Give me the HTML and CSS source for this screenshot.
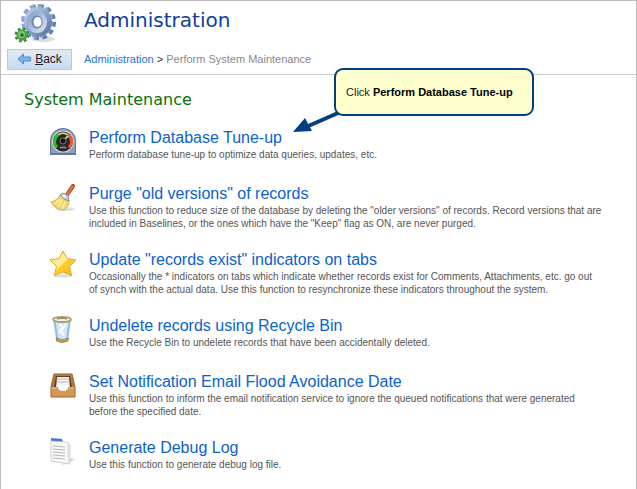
FILE: index.html
```
<!DOCTYPE html>
<html lang="en">
<head>
    <meta charset="UTF-8">
    <meta name="viewport" content="width=device-width, initial-scale=1.0">
    <title>Administration</title>
    <link rel="stylesheet" href="styles.css">
</head>
<body>
    <div class="page">
        <header class="header">
            <div class="logo">
                <svg width="44" height="44" viewBox="0 0 44 44">
                    <defs>
                        <linearGradient id="gearBlue" x1="0" y1="0" x2="1" y2="1">
                            <stop offset="0" stop-color="#c9d9ef"/>
                            <stop offset="0.5" stop-color="#8aa3cb"/>
                            <stop offset="1" stop-color="#526d9f"/>
                        </linearGradient>
                        <linearGradient id="gearFace" x1="0" y1="0" x2="1" y2="1">
                            <stop offset="0" stop-color="#7d99c4"/>
                            <stop offset="1" stop-color="#dce7f5"/>
                        </linearGradient>
                    </defs>
                    <ellipse cx="30" cy="37" rx="12" ry="3" fill="#dddddd"/>
                    <ellipse cx="26" cy="20" rx="15" ry="16" fill="none" stroke="#607caf" stroke-width="4" stroke-dasharray="4.5 3.6"/>
                    <ellipse cx="24" cy="19" rx="14" ry="15" fill="none" stroke="#8ea8d0" stroke-width="4" stroke-dasharray="4.5 3.1"/>
                    <ellipse cx="25" cy="20" rx="14" ry="15" fill="url(#gearBlue)"/>
                    <ellipse cx="24" cy="20" rx="10" ry="11" fill="url(#gearFace)"/>
                    <ellipse cx="24" cy="20" rx="5.5" ry="6.5" fill="#6883b3"/>
                    <ellipse cx="24.5" cy="20" rx="4" ry="5" fill="#ffffff"/>
                    <circle cx="9" cy="33" r="6" fill="none" stroke="#3f8c39" stroke-width="3" stroke-dasharray="2.7 2"/>
                    <circle cx="9" cy="33" r="5.5" fill="#4b9d42"/>
                    <circle cx="8.5" cy="32.5" r="3.5" fill="#83c477"/>
                    <circle cx="9" cy="33" r="1.8" fill="#28692a"/>
                </svg>
            </div>
            <h1>Administration</h1>
        </header>

        <nav class="toolbar">
            <button type="button" class="back" accesskey="b">
                <svg width="15" height="12" viewBox="0 0 15 12">
                    <path d="M1 6 L6.5 1 V4 H13.5 V8 H6.5 V11 Z" fill="#79b4f2" stroke="#5489c7"/>
                </svg>
                <span><u>B</u>ack</span>
            </button>
            <div class="breadcrumb">
                <a href="#">Administration</a> <span class="sep">&gt;</span> Perform System Maintenance
            </div>
        </nav>

        <main>
            <h2>System Maintenance</h2>

            <ul class="tasks">
                <li class="task">
                    <svg class="icon" viewBox="0 0 28 28">
                        <path d="M1 27 V13 A13 13 0 0 1 27 13 V27 Z" fill="#65799c"/>
                        <path d="M2 25 V13 A12 12 0 0 1 26 13 V25 Z" fill="#8d9fbd"/>
                        <circle cx="14" cy="13.5" r="11" fill="#d3d7dc"/>
                        <circle cx="14" cy="13.5" r="10" fill="#292929"/>
                        <path d="M8 19.5 A8 8 0 0 1 9 7" fill="none" stroke="#24c52b" stroke-width="3"/>
                        <path d="M9 7 A8 8 0 0 1 19 7" fill="none" stroke="#d8c778" stroke-width="2"/>
                        <path d="M19 7 A8 8 0 0 1 20 19.5" fill="none" stroke="#f0562b" stroke-width="3"/>
                        <path d="M14 13 L19 8" stroke="#eeeeee" stroke-width="1.5"/>
                        <circle cx="14" cy="13" r="3" fill="#111111" stroke="#777777"/>
                        <path d="M11 19.5 H17" stroke="#bbbbbb" stroke-width="1.5" stroke-dasharray="1.5 0.7"/>
                    </svg>
                    <div class="info">
                        <a href="#">Perform Database Tune-up</a>
                        <p>Perform database tune-up to optimize data queries, updates, etc.</p>
                    </div>
                </li>
                <li class="task">
                    <svg class="icon" viewBox="0 0 28 28">
                        <ellipse cx="16" cy="25" rx="10" ry="2" fill="#e2e2e2"/>
                        <path d="M17 12 L24 2" stroke="#a94a27" stroke-width="4" stroke-linecap="round"/>
                        <path d="M17 12 L23.5 2.5" stroke="#e67d48" stroke-width="2" stroke-linecap="round"/>
                        <path d="M11 11 C9 15 6 17 2 18 C4 22 9 26 15 26 C18 24 20 21 20 17 Z" fill="#eed675" stroke="#cfae50"/>
                        <path d="M11 15 L6 20 M13 16 L9 23 M16 18 L13 25" stroke="#fff2ad" stroke-width="1.5"/>
                        <path d="M11 11 Q13 8 17 10 Q20 12 20 17 Q15 16 11 11 Z" fill="#ced4dd" stroke="#858d9a"/>
                        <circle cx="15" cy="12" r="1.5" fill="#ffffff"/>
                    </svg>
                    <div class="info">
                        <a href="#">Purge "old versions" of records</a>
                        <p>Use this function to reduce size of the database by deleting the "older versions" of records. Record versions that are<br>
                        included in Baselines, or the ones which have the "Keep" flag as ON, are never purged.</p>
                    </div>
                </li>
                <li class="task">
                    <svg class="icon" viewBox="0 0 28 28">
                        <defs>
                            <linearGradient id="starGold" x1="0" y1="0" x2="1" y2="1">
                                <stop offset="0" stop-color="#ffe66c"/>
                                <stop offset="0.5" stop-color="#fff0a0"/>
                                <stop offset="0.52" stop-color="#ffce2c"/>
                                <stop offset="1" stop-color="#f9b812"/>
                            </linearGradient>
                        </defs>
                        <ellipse cx="14" cy="26" rx="10" ry="1.5" fill="#dddddd"/>
                        <path d="M14 1 L18 8.5 L27 10 L20.5 16.5 L22.5 25.5 L14 22 L5.5 25.5 L7.5 16.5 L1 10 L10 8.5 Z" fill="url(#starGold)" stroke="#e5a328" stroke-linejoin="round"/>
                    </svg>
                    <div class="info">
                        <a href="#">Update "records exist" indicators on tabs</a>
                        <p>Occasionally the * indicators on tabs which indicate whether records exist for Comments, Attachments, etc. go out<br>
                        of synch with the actual data. Use this function to resynchronize these indicators throughout the system.</p>
                    </div>
                </li>
                <li class="task">
                    <svg class="icon" viewBox="0 0 28 28">
                        <path d="M4 4 L7 24 Q13 27 19 24 L22 4 Z" fill="#d4e7f4"/>
                        <path d="M5.5 5 L8.5 24 M20.5 5 L18 24" stroke="#8dbfe6" stroke-width="2"/>
                        <path d="M10 8 L14 11 L11 15 L15 19 M17 8 L13 14" fill="none" stroke="#f8fcff" stroke-width="2"/>
                        <path d="M7 22 Q13 25 19.5 22 L19 25 Q13 28 7.5 25 Z" fill="#c2a05a" stroke="#806235" stroke-width="0.6"/>
                        <ellipse cx="13" cy="3.5" rx="9" ry="2.5" fill="#eef5f8" stroke="#b99a58" stroke-width="1.8"/>
                        <path d="M8 3 Q13 1.5 18 3" fill="none" stroke="#655e4e" stroke-width="0.8"/>
                    </svg>
                    <div class="info">
                        <a href="#">Undelete records using Recycle Bin</a>
                        <p>Use the Recycle Bin to undelete records that have been accidentally deleted.</p>
                    </div>
                </li>
                <li class="task">
                    <svg class="icon" viewBox="0 0 28 28">
                        <path d="M5 2 H23 L26 15 V25 H2 V15 Z" fill="#bc7837" stroke="#9b5e2b"/>
                        <path d="M7 4 H21 L23 15 H5 Z" fill="#59402c"/>
                        <path d="M8 5 H20 L21 17 H7 Z" fill="#f2f2f2"/>
                        <path d="M8 7 H20 M8 10 H20.5" stroke="#bcbcbc"/>
                        <path d="M2.5 15 H9 Q9 19 14 19 Q19 19 19 15 H25.5 V24.5 H2.5 Z" fill="#d49754"/>
                        <path d="M9 13 H19 V15 Q19 19 14 19 Q9 19 9 15 Z" fill="#ffffff"/>
                        <path d="M3 16 H8 M20 16 H25" stroke="#edc28a"/>
                    </svg>
                    <div class="info">
                        <a href="#">Set Notification Email Flood Avoidance Date</a>
                        <p>Use this function to inform the email notification service to ignore the queued notifications that were generated<br>
                        before the specified date.</p>
                    </div>
                </li>
                <li class="task">
                    <svg class="icon" viewBox="0 0 28 28">
                        <path d="M18 26 L26 21 L22 20 L12 27 Z" fill="#d8d8d8"/>
                        <path d="M2 0 L13 1 L15 6 L2 5 Z" fill="#3e7cd2"/>
                        <path d="M2 3 L18 4 L21 7 V26 L2 23 Z" fill="#f8f8f8" stroke="#c2c5ca" stroke-width="0.8"/>
                        <path d="M18 5 L21 7 V26 L19 25.5 Z" fill="#dde0e5"/>
                        <path d="M4 8 L16 9 M4 11 L16 12 M4 14 L16 15 M4 17 L16 18 M4 20 L16 21" stroke="#b4b8bf"/>
                    </svg>
                    <div class="info">
                        <a href="#">Generate Debug Log</a>
                        <p>Use this function to generate debug log file.</p>
                    </div>
                </li>
            </ul>
        </main>

        <!-- Help callout, lies over the page -->
        <div class="callout">
            Click <b>Perform Database Tune-up</b>
            <svg class="arrow" width="48" height="26" viewBox="0 0 48 26">
                <path d="M46 4 L14 18" stroke="#003f80" stroke-width="4"/>
                <path d="M1 23 L13 9 L20 22 Z" fill="#003f80"/>
            </svg>
        </div>
    </div>
</body>
</html>
```

FILE: styles.css
```
* {
    box-sizing: border-box;
}

body {
    margin: 0;
    font-family: "Liberation Sans", Arial, sans-serif;
    font-size: 11px;
    color: #555;
    background-color: #fff;
}

.page {
    position: relative;
    min-height: 100vh;
    border: 1px solid #bbb;
}

a {
    color: #0b62cc;
    text-decoration: none;
}

a:hover {
    text-decoration: underline;
}

.header {
    display: flex;
    height: 46px;
    padding-left: 12px;
}

.logo {
    width: 71px;
    padding-top: 1px;
}

h1 {
    margin: 0;
    padding-top: 7px;
    font-family: "DejaVu Sans", Verdana, sans-serif;
    font-size: 20px;
    line-height: 24px;
    font-weight: normal;
    color: #0d409b;
}

.toolbar {
    display: flex;
    align-items: center;
    gap: 12px;
    height: 28px;
    padding-left: 6px;
    padding-bottom: 3px;
    border-bottom: 1px solid #ccc;
}

.back {
    display: flex;
    align-items: center;
    justify-content: center;
    gap: 3px;
    width: 65px;
    height: 21px;
    padding: 0;
    border: 1px solid #b5cbe5;
    background: linear-gradient(#e1ebf7, #c8daef);
    font-family: inherit;
    font-size: 12px;
    color: #222;
    cursor: pointer;
}

.breadcrumb {
    font-size: 11px;
    color: #888;
}

.breadcrumb a {
    color: #1a73dc;
}

.sep {
    color: #333;
}

h2 {
    margin: 0;
    padding: 15px 23px 0;
    font-family: "DejaVu Sans", Verdana, sans-serif;
    font-size: 16px;
    line-height: 20px;
    font-weight: normal;
    color: #0a700f;
}

.tasks {
    list-style: none;
    margin: 0;
    padding: 18px 12px 0 48px;
}

.task {
    display: flex;
    gap: 12px;
    min-height: 56px;
    padding-bottom: 20px;
}

.icon {
    flex: none;
    width: 28px;
    height: 28px;
}

.info a {
    display: block;
    font-size: 16px;
    line-height: 20px;
}

.info p {
    margin: 0;
    font-size: 10px;
    line-height: 13px;
}

.callout {
    position: absolute;
    top: 67px;
    left: 333px;
    padding: 15px 19px 15px 10px;
    border: 2px solid #003f80;
    border-radius: 9px;
    background-color: #ffffce;
    line-height: 14px;
    color: #222;
    white-space: nowrap;
}

.callout b {
    color: #000;
}

.arrow {
    position: absolute;
    top: 39px;
    left: -44px;
}
```
